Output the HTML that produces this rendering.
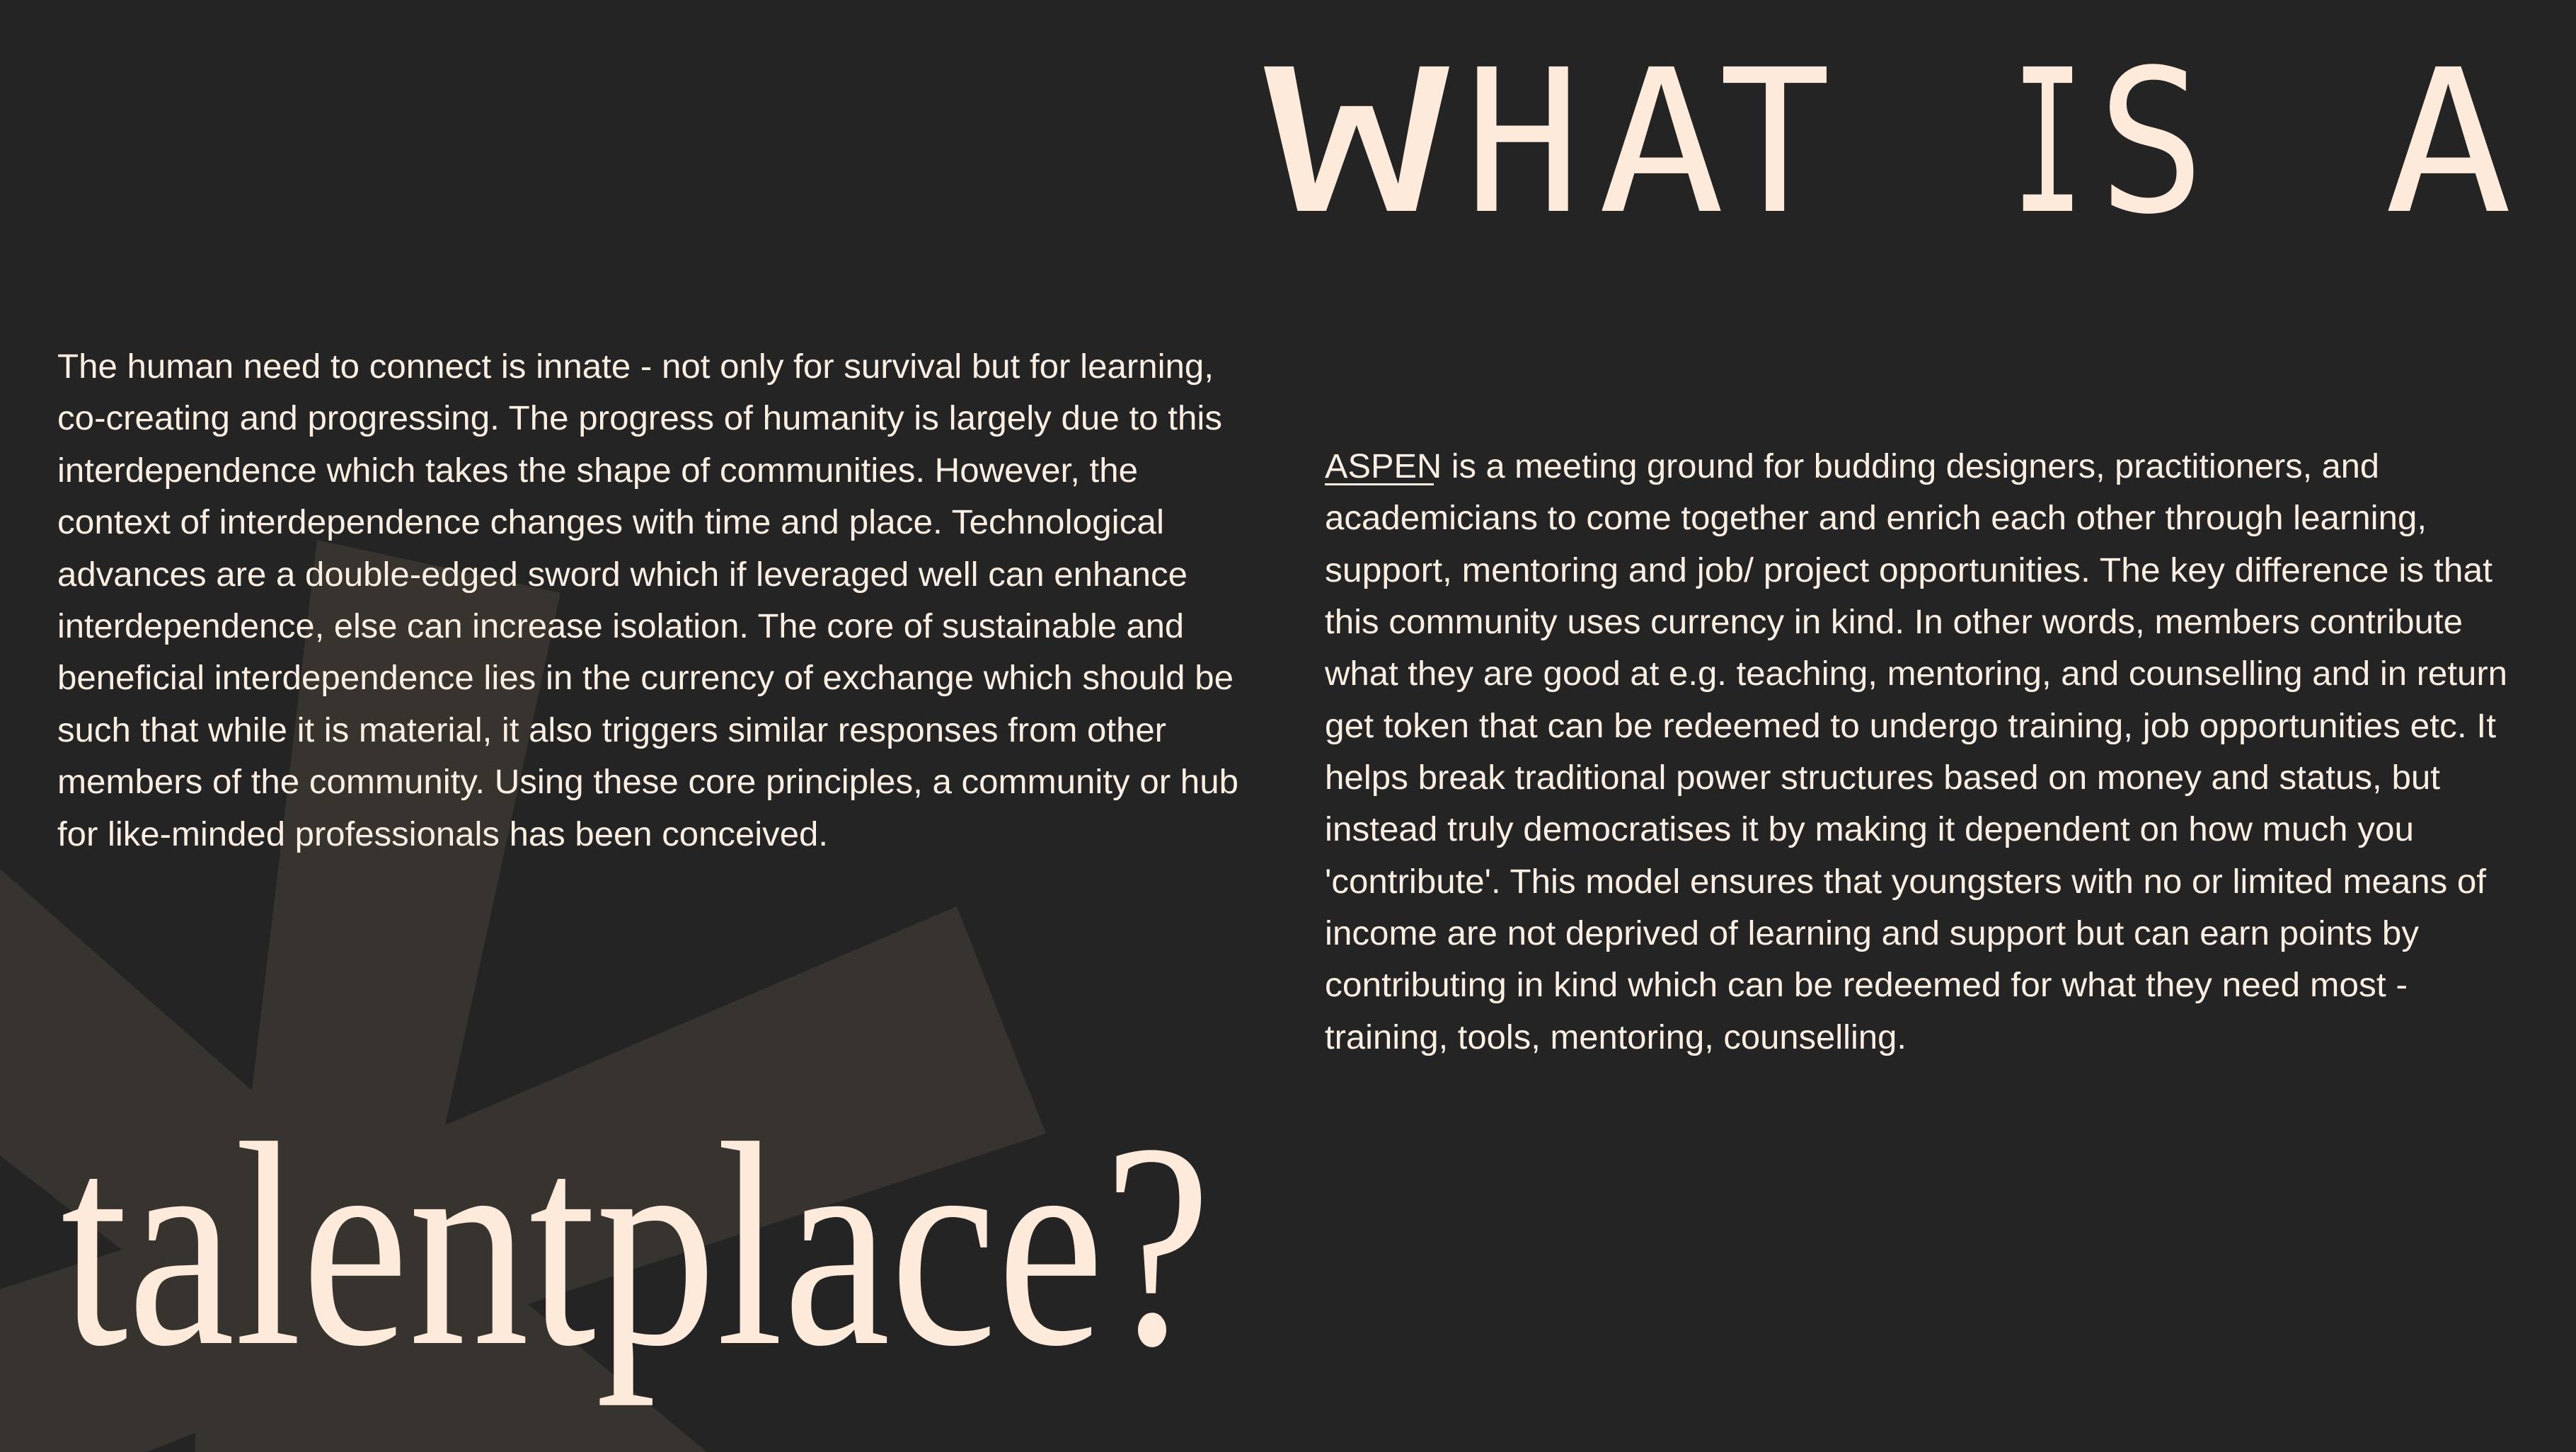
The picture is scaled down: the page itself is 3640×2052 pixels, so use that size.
<!DOCTYPE html>
<html><head><meta charset="utf-8"><style>
html,body{margin:0;padding:0;background:#242424;overflow:hidden}
svg{display:block}
.p{font-family:"Liberation Sans",sans-serif;font-size:48px;fill:#fbeee3}
.h{font-family:"DejaVu Sans Mono","Liberation Mono",monospace;font-size:280px;fill:#fdeadb}
.s{font-family:"Liberation Serif",serif;font-size:412px;fill:#fdeadb}
</style></head><body>
<svg width="3640" height="2052" viewBox="0 0 3640 2052" xmlns="http://www.w3.org/2000/svg">
<rect width="3640" height="2052" fill="#242424"/>
<polygon fill="#37342f" points="448,763 792,838 629,1590 1352,1281 1478,1602 746,1843 999,2052 276,2052 276,2025 207,2052 0,2052 0,1822 172,1766 0,1633 0,1228 356,1541"/>
<g class="h">
<text x="1786" y="298" textLength="262" lengthAdjust="spacingAndGlyphs">W</text>
<text x="2069" y="298" textLength="165" lengthAdjust="spacingAndGlyphs">H</text>
<text x="2258" y="298" textLength="179" lengthAdjust="spacingAndGlyphs">A</text>
<text x="2429" y="298" textLength="158" lengthAdjust="spacingAndGlyphs">T</text>
<text x="2842" y="298" textLength="103" lengthAdjust="spacingAndGlyphs">I</text>
<text x="2964" y="298" textLength="152" lengthAdjust="spacingAndGlyphs">S</text>
<text x="3369" y="298" textLength="181" lengthAdjust="spacingAndGlyphs">A</text>
</g>
<g class="p">
<text x="81" y="534" textLength="1634" lengthAdjust="spacingAndGlyphs">The human need to connect is innate - not only for survival but for learning,</text>
<text x="81" y="607" textLength="1646" lengthAdjust="spacingAndGlyphs">co-creating and progressing. The progress of humanity is largely due to this</text>
<text x="81" y="681" textLength="1527" lengthAdjust="spacingAndGlyphs">interdependence which takes the shape of communities. However, the</text>
<text x="81" y="754" textLength="1564" lengthAdjust="spacingAndGlyphs">context of interdependence changes with time and place. Technological</text>
<text x="81" y="828" textLength="1597" lengthAdjust="spacingAndGlyphs">advances are a double-edged sword which if leveraged well can enhance</text>
<text x="81" y="901" textLength="1592" lengthAdjust="spacingAndGlyphs">interdependence, else can increase isolation. The core of sustainable and</text>
<text x="81" y="974" textLength="1662" lengthAdjust="spacingAndGlyphs">beneficial interdependence lies in the currency of exchange which should be</text>
<text x="81" y="1048" textLength="1567" lengthAdjust="spacingAndGlyphs">such that while it is material, it also triggers similar responses from other</text>
<text x="81" y="1121" textLength="1669" lengthAdjust="spacingAndGlyphs">members of the community. Using these core principles, a community or hub</text>
<text x="81" y="1195" textLength="1089" lengthAdjust="spacingAndGlyphs">for like-minded professionals has been conceived.</text>

<text x="1872" y="675" textLength="1490" lengthAdjust="spacingAndGlyphs">ASPEN is a meeting ground for budding designers, practitioners, and</text>
<text x="1872" y="748" textLength="1557" lengthAdjust="spacingAndGlyphs">academicians to come together and enrich each other through learning,</text>
<text x="1872" y="822" textLength="1650" lengthAdjust="spacingAndGlyphs">support, mentoring and job/ project opportunities. The key difference is that</text>
<text x="1872" y="895" textLength="1608" lengthAdjust="spacingAndGlyphs">this community uses currency in kind. In other words, members contribute</text>
<text x="1872" y="968" textLength="1671" lengthAdjust="spacingAndGlyphs">what they are good at e.g. teaching, mentoring, and counselling and in return</text>
<text x="1872" y="1042" textLength="1655" lengthAdjust="spacingAndGlyphs">get token that can be redeemed to undergo training, job opportunities etc. It</text>
<text x="1872" y="1115" textLength="1576" lengthAdjust="spacingAndGlyphs">helps break traditional power structures based on money and status, but</text>
<text x="1872" y="1188" textLength="1539" lengthAdjust="spacingAndGlyphs">instead truly democratises it by making it dependent on how much you</text>
<text x="1872" y="1262" textLength="1641" lengthAdjust="spacingAndGlyphs">'contribute'. This model ensures that youngsters with no or limited means of</text>
<text x="1872" y="1335" textLength="1546" lengthAdjust="spacingAndGlyphs">income are not deprived of learning and support but can earn points by</text>
<text x="1872" y="1408" textLength="1530" lengthAdjust="spacingAndGlyphs">contributing in kind which can be redeemed for what they need most -</text>
<text x="1872" y="1482" textLength="822" lengthAdjust="spacingAndGlyphs">training, tools, mentoring, counselling.</text>
</g>
<rect x="1872" y="683" width="154" height="3" fill="#fbeee3"/>
<text class="s" x="86" y="1898" textLength="1625" lengthAdjust="spacingAndGlyphs">talentplace?</text>
</svg>
</body></html>
